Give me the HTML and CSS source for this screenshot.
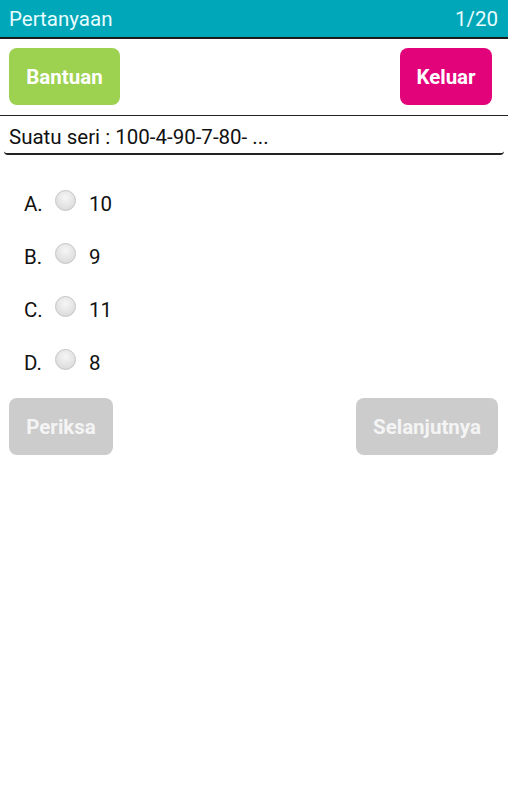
FILE: index.html
```html
<!DOCTYPE html>
<html>
<head>
<meta charset="utf-8">
<title>Pertanyaan</title>
<link rel="stylesheet" href="styles.css">
</head>
<body>
<div class="topbar">
<span>Pertanyaan</span>
<span>1/20</span>
</div>
<div class="actions">
<div class="btn green bantuan">Bantuan</div>
<div class="btn pink keluar">Keluar</div>
</div>
<div class="question">
<div class="qtext">Suatu seri : 100-4-90-7-80- ...</div>
</div>
<div class="options">
<div class="opt"><span class="lbl">A.</span><span class="radio"></span><span class="val">10</span></div>
<div class="opt"><span class="lbl">B.</span><span class="radio"></span><span class="val">9</span></div>
<div class="opt"><span class="lbl">C.</span><span class="radio"></span><span class="val">11</span></div>
<div class="opt"><span class="lbl">D.</span><span class="radio"></span><span class="val">8</span></div>
</div>
<div class="actions bottom">
<div class="btn grey periksa">Periksa</div>
<div class="btn grey lanjut">Selanjutnya</div>
</div>
</body>
</html>
```
FILE: styles.css
```css
body {margin: 0; font-family: Roboto, "Liberation Sans", sans-serif; color: #111; background: #fff}
.topbar {display: flex; justify-content: space-between; align-items: center; height: 37px; padding: 0 10px 0 9px; background-color: #00A7B8; border-bottom: 2px solid #1a1a1a; color: #e8fcff; font-size: 20.5px}
.actions {display: flex; justify-content: space-between; padding: 9px 16px 10px 9px}
.actions.bottom {padding: 9px 10px 0 9px}
.btn {display: flex; align-items: center; justify-content: center; height: 57px; border-radius: 8px; color: #fff; font-weight: bold; font-size: 20.5px}
.green {background-color: #9DD150}
.pink {background-color: #E2037A}
.grey {background-color: #CCCCCC; color: #f4f4f4}
.bantuan {width: 111px}
.keluar {width: 92px}
.periksa {width: 104px}
.lanjut {width: 142px}
.question {border-top: 1px solid #222}
.qtext {margin: 0 4px; padding: 5px 0 0 5px; box-sizing: border-box; height: 39px; display: flex; align-items: center; font-size: 20.5px; border-bottom: 2px solid #222; border-radius: 0 0 4px 4px}
.options {padding: 22px 0 0 24px}
.opt {display: flex; align-items: center; height: 53px; font-size: 20.5px}
.lbl {width: 31px}
.radio {width: 19px; height: 19px; border-radius: 50%; border: 1px solid #c4c4c4; background: radial-gradient(circle at 50% 35%, #f6f6f6 0%, #e2e2e2 60%, #d2d2d2 100%); margin-top: -7px; margin-right: 13px}
```
